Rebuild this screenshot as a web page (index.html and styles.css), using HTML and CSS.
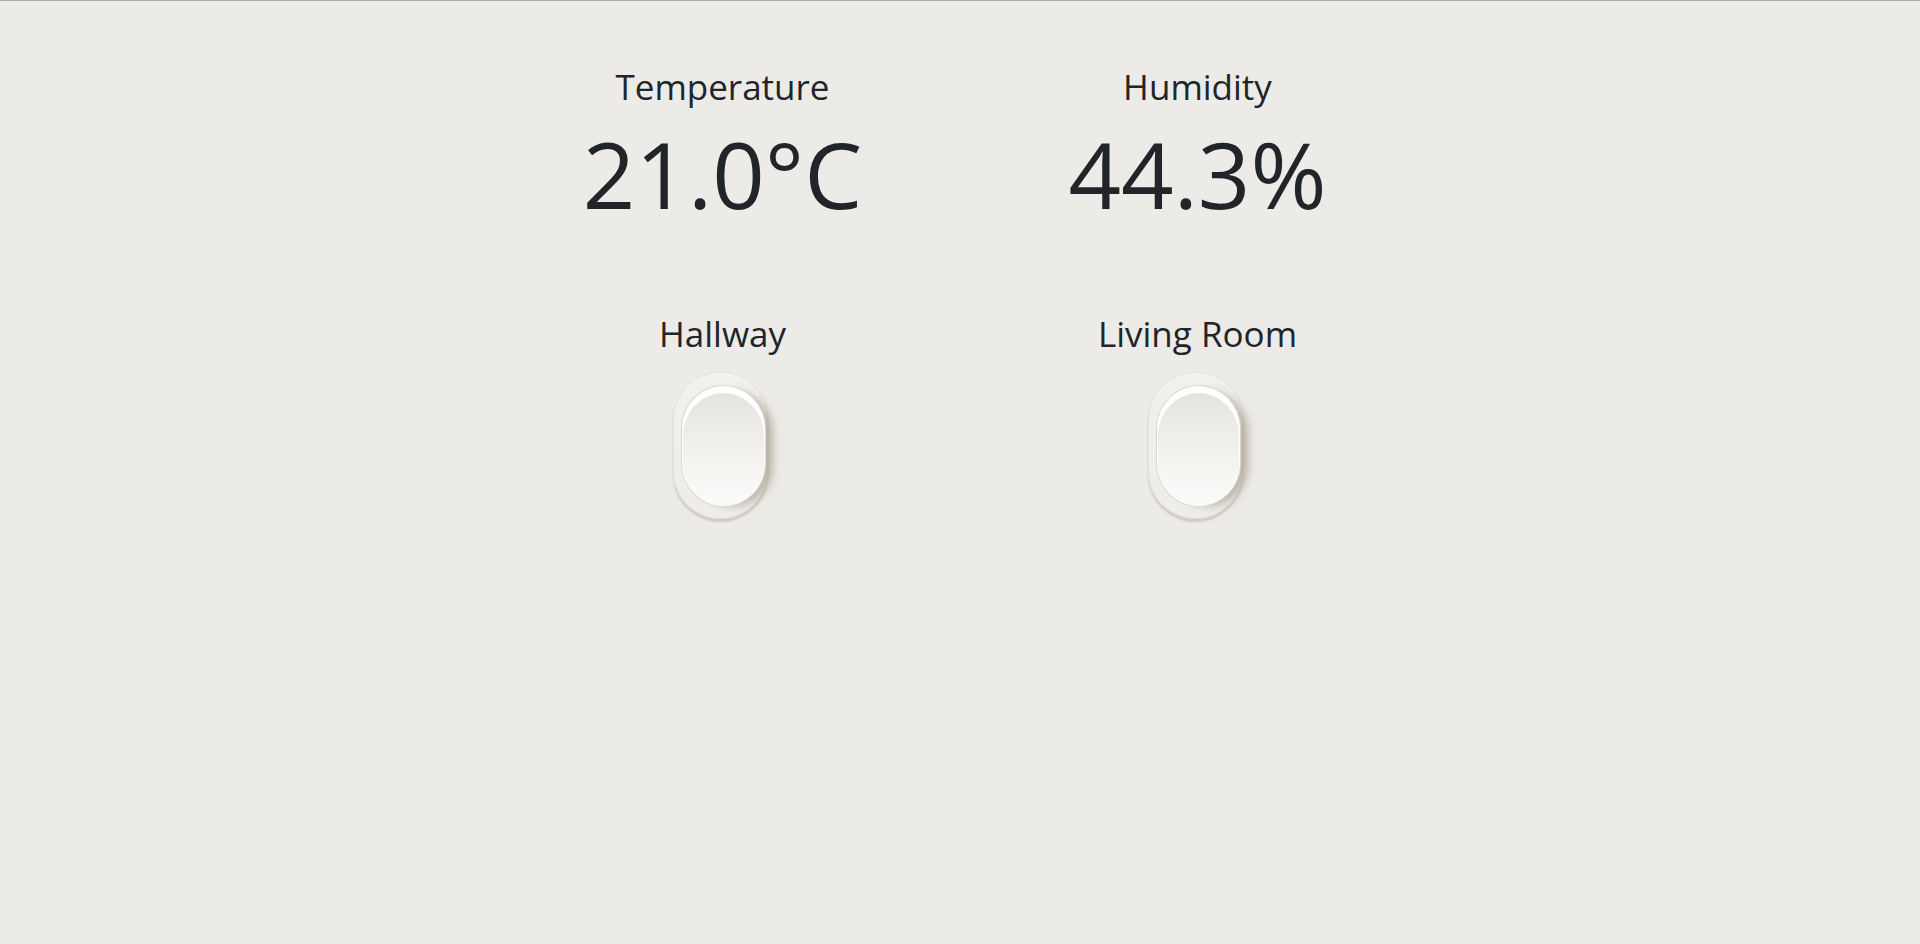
FILE: index.html
```html
<!DOCTYPE html>
<html lang="en">
<head>
<meta charset="utf-8">
<title>Home</title>
<link rel="stylesheet" href="styles.css">
</head>
<body>
<main class="dashboard">
  <section class="row sensors">
    <div class="cell">
      <h2 class="label">Temperature</h2>
      <div class="value">21.0°C</div>
    </div>
    <div class="cell">
      <h2 class="label">Humidity</h2>
      <div class="value">44.3%</div>
    </div>
  </section>
  <section class="row lights">
    <div class="cell">
      <h2 class="label">Hallway</h2>
      <button class="switch" type="button" aria-label="Hallway light"><span class="knob"></span></button>
    </div>
    <div class="cell">
      <h2 class="label">Living Room</h2>
      <button class="switch" type="button" aria-label="Living Room light"><span class="knob"></span></button>
    </div>
  </section>
</main>
</body>
</html>
```
FILE: styles.css
```css
html, body {
  margin: 0;
  padding: 0;
  height: 100%;
}
body {
  background: #ecebe7;
  border-top: 1px solid #a9a9a9;
  box-sizing: border-box;
  font-family: "Open Sans", "Noto Sans", sans-serif;
  color: #212529;
}
.dashboard {
  width: 950px;
  margin: 0 auto;
  padding-top: 65px;
}
.row {
  display: grid;
  grid-template-columns: 1fr 1fr;
}
.cell {
  display: flex;
  flex-direction: column;
  align-items: center;
}
.label {
  margin: 0;
  font-size: 35px;
  font-weight: 400;
  line-height: 1.2;
}
.value {
  margin-top: 11px;
  font-size: 92px;
  font-weight: 400;
  line-height: 1.2;
}
.lights {
  margin-top: 84px;
}
.switch {
  position: relative;
  margin: 17px 4px 0 0;
  padding: 0;
  width: 95px;
  height: 147px;
  border-radius: 48px;
  border: 1px solid #e2e0da;
  background: linear-gradient(#f1f0ec, #eeede9);
  box-shadow: 0 3px 2px rgba(150, 140, 120, 0.35), inset 0 1px 1px rgba(255,255,255,0.8);
  cursor: pointer;
}
.knob {
  position: absolute;
  left: 7px;
  top: 12px;
  width: 85px;
  height: 122px;
  box-sizing: border-box;
  border-radius: 43px / 44px;
  border: 1px solid #d9d7d1;
  background: #ffffff;
  box-shadow: 11px 3px 9px -4px rgba(140, 128, 105, 0.5);
}
.knob::after {
  content: "";
  position: absolute;
  left: 1px;
  right: 1px;
  top: 7px;
  bottom: 0;
  border-radius: 42px / 44px;
  background: linear-gradient(#e5e3de, #f3f2ef 55%, #fbfbfa);
}
```
